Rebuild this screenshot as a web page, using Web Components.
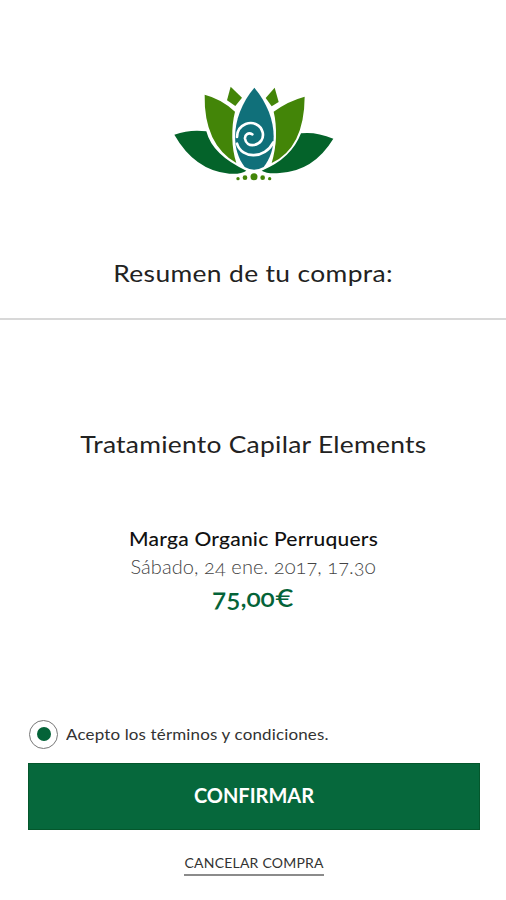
<!DOCTYPE html>
<html lang="es">
<head>
<meta charset="utf-8">
<title>Resumen de tu compra</title>
<style>
html,body{margin:0;background:#fff}
body{font-family:Lato,"Open Sans",sans-serif;color:#111}
</style>
</head>
<body>
<purchase-page>
  <lotus-logo slot="logo"></lotus-logo>
  <text-line slot="title" style="--size:24px;--track:.32px;--stretch:1.1;--ink:#222">Resumen de tu compra:</text-line>
  <text-line slot="product" style="--size:24px;--track:.24px;--stretch:1.1;--ink:#222">Tratamiento Capilar Elements</text-line>
  <purchase-detail slot="detail">
    <text-line slot="shop" style="--size:20px;--track:.21px;--stretch:1.05;--weight:500">Marga Organic Perruquers</text-line>
    <text-line slot="date" style="--size:20px;--track:.09px;--weight:300;--ink:#444">Sábado, 24 ene. 2017, 17.30</text-line>
    <text-line slot="price" style="--size:25px;--track:0px;--stretch:1.05;--weight:600;--ink:#046338">75,00<span>€</span></text-line>
  </purchase-detail>
  <terms-option slot="terms"><text-line style="--size:16px;--track:.15px;--stretch:1.06;--origin:left;--ink:#333">Acepto los términos y condiciones.</text-line></terms-option>
  <confirm-button slot="confirm"><text-line style="--size:20px;--track:0px;--weight:700;--ink:#fff">CONFIRMAR</text-line></confirm-button>
  <cancel-link slot="cancel"><text-line style="--size:14px;--track:.22px;--ink:#333">CANCELAR COMPRA</text-line></cancel-link>
</purchase-page>
<script>
function define(name, markup) {
  const template = document.createElement('template');
  template.innerHTML = markup;
  customElements.define(name, class extends HTMLElement {
    constructor() {
      super();
      this.attachShadow({mode: 'open'}).append(template.content.cloneNode(true));
    }
  });
}

define('text-line', `<style>
:host{display:block;white-space:nowrap;font-size:var(--size);line-height:30px;letter-spacing:var(--track);margin-right:calc(var(--track) * -1);font-weight:var(--weight,400);color:var(--ink,#111);font-variant-numeric:oldstyle-nums;transform:scaleX(var(--stretch,1));transform-origin:var(--origin,center)}
::slotted(span){font-variant-numeric:lining-nums}
</style><slot></slot>`);

define('lotus-logo', `<style>
:host{display:block;width:180px;height:115px;margin-left:4px}svg{display:block}
</style>
<svg width="180" height="115" viewBox="0 0 540 345" aria-label="Flor de loto">
  <g fill="#04632a">
    <path d="M28 179Q76 162 124 169Q142 240 244 287Q230 298 193 296Q89 286 28 179Z"/>
    <path d="M505 191Q451 169 408 175Q379 251 290 287Q306 297 344 294Q446 288 505 191Z"/>
  </g>
  <g fill="#438508">
    <path d="M119 59Q170 72 210 110C198 156 199 218 214 264Q116 207 119 59Z"/>
    <path d="M419 65Q370 78 326 110C337 155 335 216 320 264Q418 218 419 65Z"/>
    <path d="M197 35L231 68L211 93L186 76Z"/><path d="M329 38L341 81L320 94L302 69Z"/>
    <circle cx="267" cy="305" r="10.5"/><circle cx="240" cy="308" r="7"/><circle cx="293" cy="308" r="7"/><circle cx="219" cy="311" r="5"/><circle cx="314" cy="311" r="5"/>
  </g>
  <path fill="#10707a" stroke="#fff" stroke-width="12" stroke-linejoin="miter" paint-order="stroke" d="M268 38C202 116 193 216 239 276Q267 292 296 276C344 216 334 116 268 38Z"/>
  <path fill="none" stroke="#fff" stroke-width="8" stroke-linecap="round" d="M262 178C250 171 239 179 240 191C242 205 253 212 267 210C287 207 297 190 293 172C287 148 263 139 242 147C225 154 216 169 216 186M216 206C230 253 300 252 325 202"/>
</svg>`);

define('purchase-detail', `<style>
:host{display:flex;flex-direction:column;align-items:center}
.date{margin-top:-2px}.price{margin-top:1px}
</style><slot name="shop"></slot><div class="date"><slot name="date"></slot></div><div class="price"><slot name="price"></slot></div>`);

define('terms-option', `<style>
:host{display:flex;align-items:center;gap:8px;height:30px;padding-left:1px}
.ring{box-sizing:border-box;width:29px;height:29px;border:1px solid #777;border-radius:50%;display:grid;place-items:center}
.dot{width:14px;height:14px;border-radius:50%;background:#046338}
</style><span class="ring" role="radio" aria-checked="true"><span class="dot"></span></span><slot></slot>`);

define('confirm-button', `<style>
:host{display:block}
button{box-sizing:border-box;display:flex;align-items:center;justify-content:center;width:100%;height:67px;padding:0 0 3px;border:1px solid #04572c;background:#06683c;font-family:inherit}
</style><button><slot></slot></button>`);

define('cancel-link', `<style>
:host{display:block;border-bottom:2px solid #8b8b8b;height:26px}
</style><slot></slot>`);

define('purchase-page', `<style>
:host{display:flex;flex-direction:column;width:506px;height:900px;box-sizing:border-box;overflow:hidden;background:#fff}
header{display:flex;flex-direction:column;align-items:center;box-sizing:border-box;height:320px;padding-top:75px;border-bottom:2px solid #d8d8d8}
.title{margin-top:68px}
main{display:flex;flex-direction:column;align-items:center;padding-top:109px}
.detail{margin-top:64px}
footer{display:flex;flex-direction:column;margin:107px 26px 0 28px}
.confirm{margin-top:14px}
.cancel{display:flex;justify-content:center;margin-top:18px}
</style>
<header><slot name="logo"></slot><div class="title"><slot name="title"></slot></div></header>
<main><slot name="product"></slot><div class="detail"><slot name="detail"></slot></div></main>
<footer><slot name="terms"></slot><div class="confirm"><slot name="confirm"></slot></div><div class="cancel"><slot name="cancel"></slot></div></footer>`);
</script>
</body>
</html>
